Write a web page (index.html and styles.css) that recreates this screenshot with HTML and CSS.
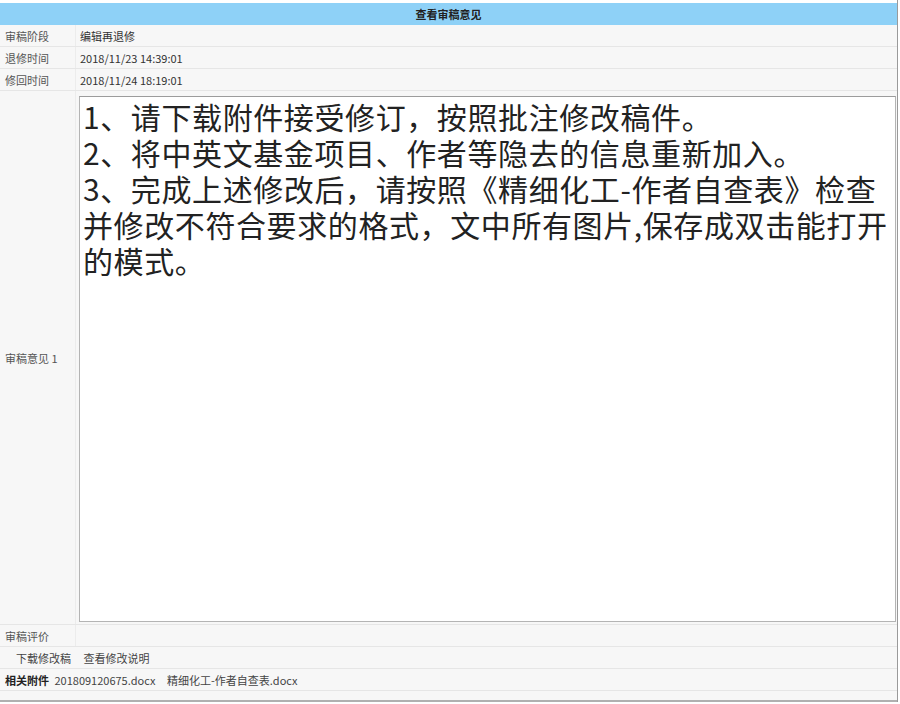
FILE: index.html
```html
<!DOCTYPE html>
<html lang="zh-CN">
<head>
    <meta charset="UTF-8">
    <title>查看审稿意见</title>
    <link rel="stylesheet" href="styles.css">
</head>
<body>
<div class="panel">
    <div class="panel-title">查看审稿意见</div>
    <table class="review-table">
        <tr>
            <td class="label">审稿阶段</td>
            <td class="value">编辑再退修</td>
        </tr>
        <tr>
            <td class="label">退修时间</td>
            <td class="value">2018/11/23 14:39:01</td>
        </tr>
        <tr>
            <td class="label">修回时间</td>
            <td class="value">2018/11/24 18:19:01</td>
        </tr>
        <tr class="opinion-row">
            <td class="label">审稿意见 1</td>
            <td class="value opinion-cell">
                <textarea class="opinion" readonly>1、请下载附件接受修订，按照批注修改稿件。
2、将中英文基金项目、作者等隐去的信息重新加入。
3、完成上述修改后，请按照《精细化工-作者自查表》检查并修改不符合要求的格式，文中所有图片,保存成双击能打开的模式。</textarea>
            </td>
        </tr>
        <tr>
            <td class="label">审稿评价</td>
            <td class="value"></td>
        </tr>
        <tr>
            <td class="links" colspan="2">
                <a href="#">下载修改稿</a>
                <a href="#">查看修改说明</a>
            </td>
        </tr>
        <tr>
            <td class="files" colspan="2">
                <b>相关附件</b>
                <a href="#">201809120675.docx</a>
                <a href="#">精细化工-作者自查表.docx</a>
            </td>
        </tr>
    </table>
    <div class="panel-bottom"></div>
</div>
</body>
</html>
```

FILE: styles.css
```css
body {
    margin: 0;
    padding: 0;
    background-color: #fff;
    font-family: "Noto Sans CJK SC", "Noto Sans", sans-serif;
    font-size: 11px;
    color: #333;
}

.panel {
    width: 897px;
    padding-top: 3px;
    border-right: 1px solid #9a9a9a;
}

.panel-title {
    height: 22px;
    line-height: 22px;
    text-align: center;
    background-color: #8ed1f7;
    color: #222;
    font-weight: bold;
}

.review-table {
    width: 100%;
    border-collapse: collapse;
    background-color: #f7f7f7;
}

.review-table td {
    height: 21px;
    padding: 0 5px;
    border-bottom: 1px solid #e6e6e6;
    vertical-align: middle;
}

.review-table .label {
    width: 66px;
    border-right: 1px solid #ececec;
    color: #555;
}

.review-table .value {
    padding-left: 4px;
    color: #333;
}

.opinion-row td {
    height: 526px;
}

.review-table .opinion-cell {
    padding: 5px 1px 2px 3px;
}

.opinion {
    display: block;
    box-sizing: border-box;
    width: 817px;
    height: 526px;
    margin: 0;
    padding: 1px 3px;
    border: 1px solid #b4b4b4;
    border-top-color: #9c9c9c;
    background-color: #fff;
    font-family: "Noto Sans CJK SC", "Noto Sans", sans-serif;
    font-size: 30px;
    line-height: 36px;
    letter-spacing: 0.6px;
    color: #222;
    resize: none;
    overflow: hidden;
}

.links {
    padding-left: 16px !important;
}

.links a {
    margin-right: 10px;
}

.files a {
    margin-left: 3px;
    margin-right: 6px;
}

a {
    color: #444;
    text-decoration: none;
}

.files b {
    color: #222;
}

.panel-bottom {
    height: 9px;
    background-color: #f7f7f7;
    border-bottom: 2px solid #b0b0b0;
}
```
